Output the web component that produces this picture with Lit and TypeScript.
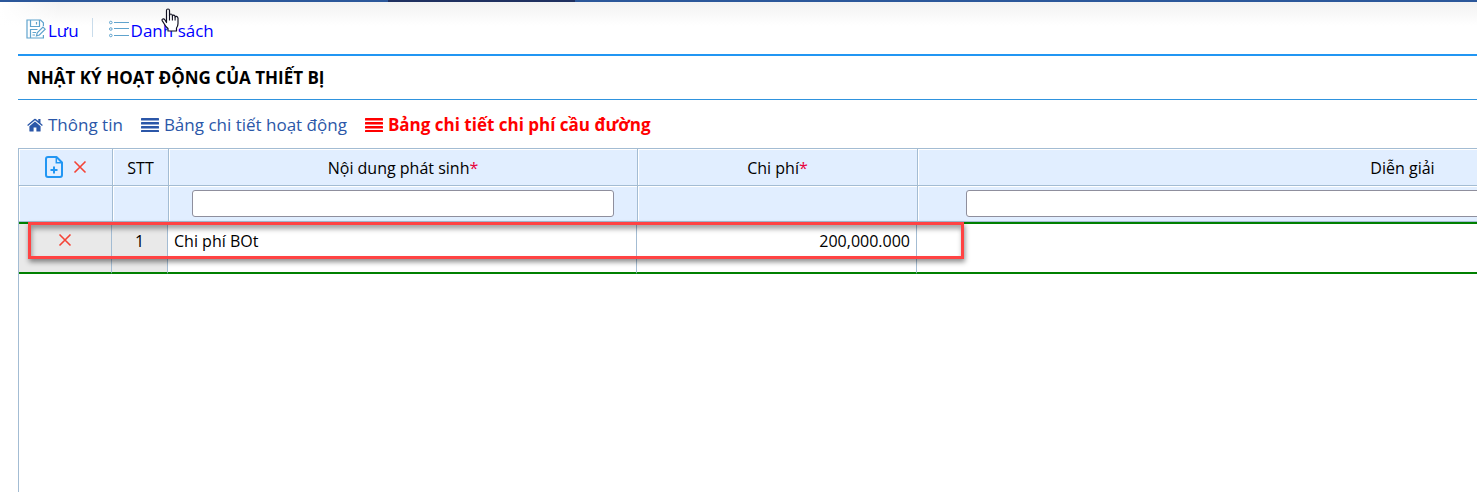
import { LitElement, html, css, svg } from "lit";
import { customElement } from "lit/decorators.js";

const cross = html`<svg class="cross" viewBox="0 0 14 14" aria-hidden="true">
  <path d="M1.5 1.5L12.5 12.5M12.5 1.5L1.5 12.5" fill="none" stroke="#f44336" stroke-width="1.6" />
</svg>`;

const lines = html`<svg class="lines" viewBox="0 0 18 14" aria-hidden="true">
  ${[0, 4, 8, 12].map((y) => svg`<rect x="0" y=${y} width="18" height="2.6" rx="0.5" fill="currentColor" />`)}
</svg>`;

@customElement("app-root")
export class AppRoot extends LitElement {
  static styles = css`
    :host {
      display: block;
      position: relative;
      min-height: 100vh;
      overflow: hidden;
      background: #fff;
      color: #000;
      font: 16px/24px "Open Sans", "Noto Sans", sans-serif;
    }
    * { box-sizing: border-box; }
    .topbar {
      height: 2px;
      background: linear-gradient(90deg, #2b579a 388px, #1f3060 388px, #1f3060 575px, #2b579a 575px);
    }
    .shade {
      background: linear-gradient(90deg, #fff, transparent 60px),
        linear-gradient(#f2f2f2, #fff 24px);
    }
    .page { padding-left: 18px; }
    .toolbar {
      display: flex;
      height: 54px;
      padding: 6px 8px 0;
      align-items: center;
      border-bottom: 2px solid #2196f3;
      font-size: 17px;
    }
    a { text-decoration: none; }
    .tool {
      display: flex;
      align-items: center;
      gap: 2px;
      color: #0000ff;
    }
    .sep {
      width: 1px;
      height: 19px;
      margin: 0 16px 8px 13px;
      background: #c9dceb;
    }
    .save, .list { width: 20px; height: 20px; margin-bottom: 4px; }
    h1 {
      margin: 0;
      padding: 10px 9px 9px;
      border-bottom: 1px solid #2f93de;
      font-size: 17px;
      line-height: 24px;
      font-weight: 700;
    }
    .tabs {
      display: flex;
      gap: 18px;
      height: 48px;
      padding: 2px 9px 0;
      align-items: center;
      font-size: 17px;
    }
    .tab {
      display: flex;
      align-items: center;
      gap: 5px;
      color: #2b57a8;
    }
    .tab.active { color: #f00; font-weight: 700; }
    .home { width: 16px; height: 14px; }
    .lines { width: 18px; height: 14px; }
    .grid {
      overflow: hidden;
      min-height: calc(100vh - 148px);
      border-left: 1px solid #a3bcd3;
      border-top: 1px solid #a3bcd3;
    }
    table {
      width: 1868px;
      table-layout: fixed;
      border-spacing: 0;
    }
    .c-act { width: 93px; }
    .c-no { width: 56px; }
    .c-text { width: 469px; }
    .c-cost { width: 280px; }
    th {
      height: 37px;
      padding: 2px 0 0;
      background: #e1eeff;
      border-left: 1px solid #a3bcd3;
      border-bottom: 1px solid #a3bcd3;
      box-shadow: inset 1px 1px #fff;
      font-weight: 400;
      vertical-align: middle;
    }
    .filters th { height: 36px; padding: 0; }
    th:first-child { border-left: 0; padding: 0; }
    .req { color: #e8003c; }
    .filter {
      display: block;
      width: 90%;
      height: 27px;
      margin: 0 auto;
      padding: 0 6px;
      border: 1px solid #8f8f9d;
      border-radius: 3px;
      background: #fff;
      font: inherit;
    }
    td {
      height: 52px;
      padding: 5px 6px;
      border-top: 2px solid green;
      border-bottom: 2px solid green;
      border-right: 1px solid #a3bcd3;
      vertical-align: top;
    }
    .fixed { background: #e9e9e9; text-align: center; }
    .money { text-align: right; }
    button {
      padding: 0;
      border: 0;
      background: none;
      vertical-align: middle;
      line-height: 0;
    }
    .acts { display: flex; justify-content: center; align-items: center; gap: 10px; }
    .row-act { display: flex; height: 22px; justify-content: center; align-items: center; }
    .add { width: 18px; height: 22px; display: block; }
    .cross { width: 14px; height: 14px; display: block; }
    .callout {
      position: absolute;
      left: 28px;
      top: 222px;
      width: 936px;
      height: 37px;
      border: 3px solid #ff4343;
      box-shadow: 1px 3px 5px rgba(0, 0, 0, 0.45), inset 1px 4px 5px rgba(0, 0, 0, 0.35);
      pointer-events: none;
    }
    .pointer {
      position: absolute;
      left: 161px;
      top: 8px;
      width: 18px;
      height: 24px;
    }
  `;

  render() {
    return html`
      <div class="topbar"></div>
      <div class="page shade">
        <nav class="toolbar">
          <a class="tool" href="#save">
            <svg class="save" viewBox="0 0 20 20" fill="none" stroke="#5fa3cd" stroke-width="1.2" aria-hidden="true">
              <path d="M17.4 7V3.8L14.6 1H1V19H17.4V16" />
              <path d="M4.5 1V7.5H13.5V1M10.5 3V5.5M4.5 19V10.5H11.5M6.5 13.5H10M6.5 16H9" />
              <path d="M10.5 16.8L11.2 13.8L17 8L19.2 10.2L13.4 16Z" />
            </svg>Lưu</a>
          <span class="sep"></span>
          <a class="tool" href="#list">
            <svg class="list" viewBox="0 0 20 20" fill="none" stroke="#5fa3cd" stroke-width="1" aria-hidden="true">
              <circle cx="1.8" cy="3.5" r="1.3" /><circle cx="1.8" cy="10" r="1.3" /><circle cx="1.8" cy="16.5" r="1.3" />
              <path d="M5 3.5H20M5 9.5H20M5 16.5H20" />
            </svg>Danh sách</a>
        </nav>
        <h1>NHẬT KÝ HOẠT ĐỘNG CỦA THIẾT BỊ</h1>
        <nav class="tabs">
          <a class="tab" href="#info">
            <svg class="home" viewBox="0 0 16 14" fill="currentColor" aria-hidden="true">
              <path d="M8 3.6L13.6 8.2V13Q13.6 13.6 13 13.6H9.4V9.6H6.6V13.6H3Q2.4 13.6 2.4 13V8.2Z" />
              <path d="M0.2 7L7.2 1Q8 0.4 8.8 1L11.3 3.1V1H13.5V5L15.8 7L15 8L8 2.3L1 8Z" />
            </svg>Thông tin</a>
          <a class="tab" href="#activity">${lines}Bảng chi tiết hoạt động</a>
          <a class="tab active" href="#tolls">${lines}Bảng chi tiết chi phí cầu đường</a>
        </nav>
        <div class="grid">
          <table>
            <colgroup>
              <col class="c-act" /><col class="c-no" /><col class="c-text" /><col class="c-cost" /><col />
            </colgroup>
            <thead>
              <tr>
                <th>
                  <div class="acts">
                    <button type="button" aria-label="Thêm dòng">
                      <svg class="add" viewBox="0 0 18 22" fill="none" stroke="#2196f3" stroke-width="2" aria-hidden="true">
                        <path d="M11.5 1H3Q1 1 1 3V19Q1 21 3 21H15Q17 21 17 19V6.5Z" stroke-linejoin="round" />
                        <path d="M11.3 1.5V6.7H16.5" stroke-width="1.5" />
                        <path d="M9 10.5V17.5M5.5 14H12.5" />
                      </svg>
                    </button>
                    <button type="button" aria-label="Xóa tất cả">${cross}</button>
                  </div>
                </th>
                <th>STT</th>
                <th>Nội dung phát sinh<span class="req">*</span></th>
                <th>Chi phí<span class="req">*</span></th>
                <th>Diễn giải</th>
              </tr>
              <tr class="filters">
                <th></th>
                <th></th>
                <th><input class="filter" type="text" aria-label="Nội dung phát sinh" /></th>
                <th></th>
                <th><input class="filter" type="text" aria-label="Diễn giải" /></th>
              </tr>
            </thead>
            <tbody>
              <tr>
                <td class="fixed">
                  <div class="row-act"><button type="button" aria-label="Xóa dòng">${cross}</button></div>
                </td>
                <td class="fixed">1</td>
                <td>Chi phí BOt</td>
                <td class="money">200,000.000</td>
                <td></td>
              </tr>
            </tbody>
          </table>
        </div>
      </div>
      <div class="callout"></div>
      <svg class="pointer" viewBox="0 0 18 24" aria-hidden="true">
        <path d="M5.5 14.5V2.5Q5.5 1 7 1T8.5 2.5V7.5Q8.7 6 10 6T11.4 8Q11.8 7 12.9 7.2T14.1 9Q14.6 8.2 15.6 8.4T17 10.2V15.5Q17 18 15.5 20V23H7V20.5Q4.5 18.5 3 15.5L1.2 12.6Q0.6 11.4 1.8 11T4 12Z"
          fill="#fff" stroke="#111122" stroke-width="1.2" stroke-linejoin="round" />
        <path d="M8.5 7V12.5M11.4 8V12.5M14.1 9V12.5" stroke="#111122" stroke-width="1.1" />
      </svg>
    `;
  }
}
